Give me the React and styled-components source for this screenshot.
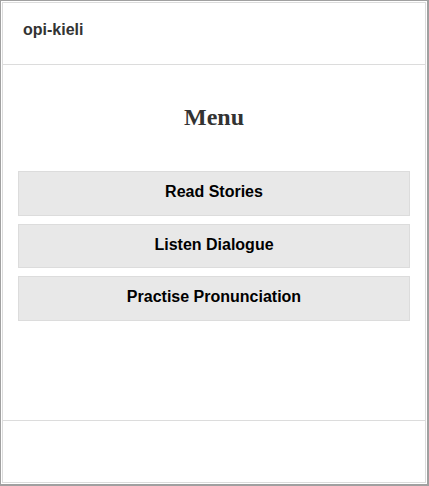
import React from "react";
import styled, { createGlobalStyle } from "styled-components";

const Global = createGlobalStyle`
  html, body { margin: 0; padding: 0; background: #fff; }
  * { box-sizing: border-box; }
`;

const Frame = styled.div`
  width: 429px;
  height: 486px;
  border-style: solid;
  border-color: #a0a0a0;
  border-width: 1px 2px 2px 1px;
  padding: 1px;
  background: #fff;
`;

const Screen = styled.div`
  height: 100%;
  border: 1px solid #dcdcdc;
  display: flex;
  flex-direction: column;
  font-family: "Liberation Sans", Arial, sans-serif;
`;

const Header = styled.header`
  height: 62px;
  flex: none;
  border-bottom: 1px solid #dcdcdc;
  padding: 17px 0 0 20px;
`;

const Brand = styled.div`
  font-size: 16px;
  line-height: 20px;
  font-weight: bold;
  color: #333;
`;

const Main = styled.main`
  flex: 1;
  padding: 0 15px;
  display: flex;
  flex-direction: column;
`;

const Title = styled.h1`
  margin: 38px 0 40px;
  text-align: center;
  font-family: "Liberation Serif", "Times New Roman", serif;
  font-size: 24px;
  line-height: 28px;
  font-weight: bold;
  color: #333;
`;

const Menu = styled.div`
  display: flex;
  flex-direction: column;
  gap: 8px;
`;

const MenuButton = styled.button`
  height: 44.5px;
  width: 100%;
  padding: 0 0 2px;
  background: #e8e8e8;
  border: 1px solid #dcdcdc;
  font-family: "Liberation Sans", Arial, sans-serif;
  font-size: 16px;
  font-weight: bold;
  color: #000;
  cursor: pointer;
`;

const Footer = styled.footer`
  height: 62px;
  flex: none;
  border-top: 1px solid #dcdcdc;
`;

export default function App() {
  return (
    <>
      <Global />
      <Frame>
        <Screen>
          <Header>
            <Brand>opi-kieli</Brand>
          </Header>
          <Main>
            <Title>Menu</Title>
            <Menu>
              <MenuButton>Read Stories</MenuButton>
              <MenuButton>Listen Dialogue</MenuButton>
              <MenuButton>Practise Pronunciation</MenuButton>
            </Menu>
          </Main>
          <Footer />
        </Screen>
      </Frame>
    </>
  );
}
